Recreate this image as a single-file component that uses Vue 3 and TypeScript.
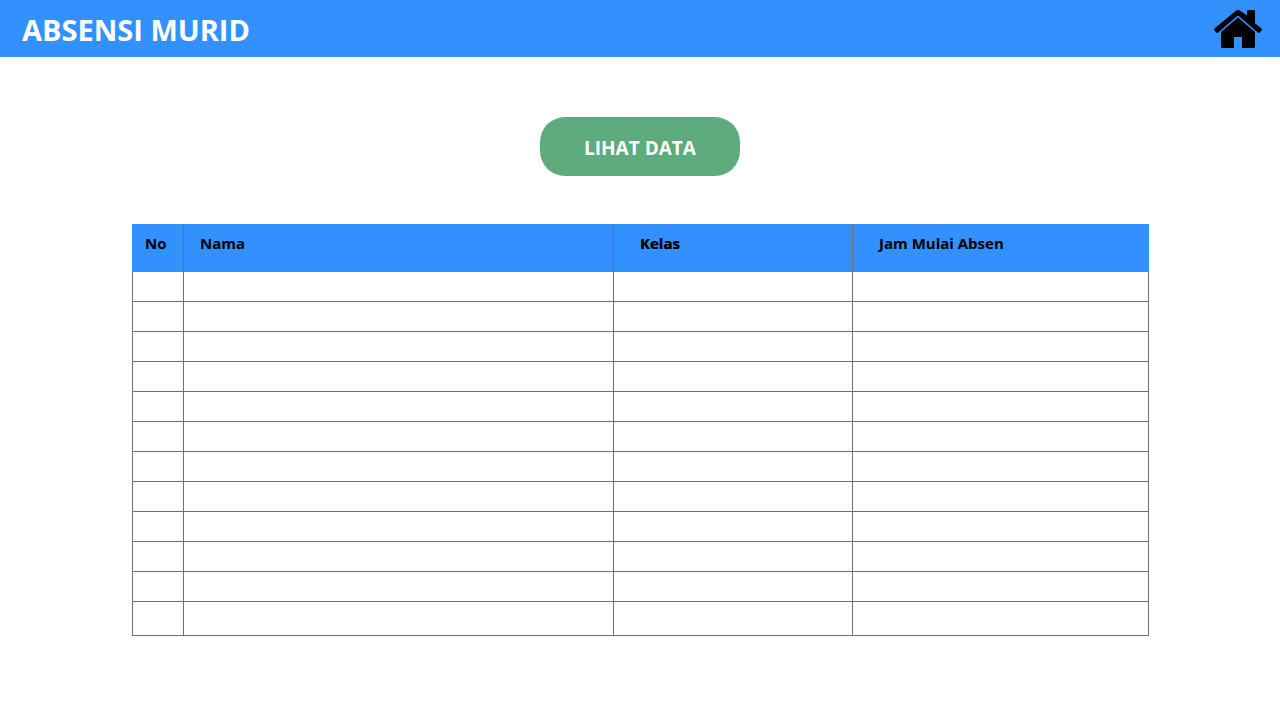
<script setup lang="ts">
interface Column {
  key: string
  label: string
}

const columns: Column[] = [
  { key: 'no', label: 'No' },
  { key: 'nama', label: 'Nama' },
  { key: 'kelas', label: 'Kelas' },
  { key: 'jam', label: 'Jam Mulai Absen' },
]

const rowCount = 12
</script>

<template>
  <div class="page">
    <header class="topbar">
      <h1 class="title">ABSENSI MURID</h1>
      <a class="home" href="#" aria-label="Home">
        <svg viewBox="0 0 48 40" width="48" height="40" aria-hidden="true">
          <path d="M33 6.500V2.200Q33 1 34.200 1H39.800Q41 1 41 2.200V14.200L47.200 19.300Q48.400 20.400 47.500 21.500L46 23.300Q45 24.400 43.800 23.400L25 7.200Q24 6.400 23 7.200L4.200 23.400Q3 24.400 2 23.300L.5 21.500Q-.4 20.400.8 19.300L21.500 1.900Q24 .1 26.500 1.900Z" />
          <path d="M7 23L24 8.600L41 23V37.500Q41 39 39.500 39H28V28H20V39H8.500Q7 39 7 37.500Z" />
        </svg>
      </a>
    </header>

    <main class="content">
      <div class="actions">
        <button class="view-button" type="button">LIHAT DATA</button>
      </div>

      <table class="attendance">
        <colgroup>
          <col v-for="column in columns" :key="column.key" :class="'col-' + column.key" />
        </colgroup>
        <thead>
          <tr>
            <th v-for="column in columns" :key="column.key" :class="'head-' + column.key" scope="col">
              {{ column.label }}
            </th>
          </tr>
        </thead>
        <tbody>
          <tr v-for="row in rowCount" :key="row">
            <td v-for="column in columns" :key="column.key"></td>
          </tr>
        </tbody>
      </table>
    </main>
  </div>
</template>

<style>
body {
  margin: 0;
  background: #fff;
}
</style>

<style scoped>
.page {
  font-family: "Segoe UI", "Open Sans", "Noto Sans", sans-serif;
  color: #000;
}

.topbar {
  display: flex;
  align-items: center;
  justify-content: space-between;
  box-sizing: border-box;
  height: 57px;
  padding: 0 18px 0 22px;
  background: #3391ff;
}

.title {
  margin: 0;
  padding-top: 2px;
  font-size: 29px;
  line-height: 40px;
  font-weight: 700;
  color: #fff;
}

.home {
  display: block;
  color: #000;
}

.home svg {
  display: block;
  fill: currentColor;
}

.content {
  padding: 60px 0 24px;
}

.actions {
  display: flex;
  justify-content: center;
}

.view-button {
  width: 200px;
  height: 59px;
  padding: 2px 0 0;
  border: 0;
  border-radius: 25px;
  background: #5eab7d;
  color: #fff;
  font: inherit;
  font-size: 19px;
  font-weight: 700;
  cursor: pointer;
}

.attendance {
  width: calc(100% - 263px);
  margin: 48px 131px 0 132px;
  table-layout: fixed;
  border-collapse: separate;
  border-spacing: 0;
}

.col-no {
  width: 52px;
}

.col-nama {
  width: 430px;
}

.col-kelas {
  width: 239px;
}

.col-jam {
  width: 296px;
}

th {
  box-sizing: border-box;
  height: 48px;
  padding: 7px 0 0 26px;
  border-right: 1px solid #707070;
  background: #3391ff;
  font-size: 15px;
  line-height: 24px;
  font-weight: 700;
  text-align: left;
  vertical-align: top;
}

th:last-child {
  border-right-color: #3391ff;
}

.head-no {
  padding-left: 13px;
}

.head-nama {
  padding-left: 16px;
}

.head-kelas {
  text-shadow: 0 0 #000;
}

td {
  box-sizing: border-box;
  height: 30px;
  padding: 0;
  border-right: 1px solid #707070;
  border-bottom: 1px solid #707070;
}

td:first-child {
  border-left: 1px solid #707070;
}

tbody tr:last-child td {
  height: 34px;
}
</style>
